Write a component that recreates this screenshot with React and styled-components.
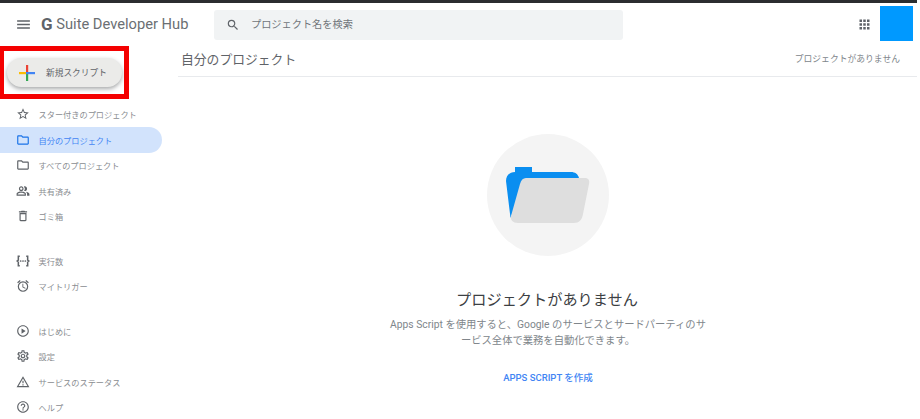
import React from 'react'
import styled, { createGlobalStyle } from 'styled-components'
import {
  MdMenu,
  MdSearch,
  MdApps,
  MdStarBorder,
  MdOutlineFolder,
  MdOutlinePeopleAlt,
  MdOutlineDelete,
  MdOutlineAlarm,
  MdOutlinePlayCircle,
  MdOutlineSettings,
  MdOutlineWarningAmber,
  MdOutlineHelpOutline,
} from 'react-icons/md'

const GlobalStyle = createGlobalStyle`
  html, body {
    margin: 0;
    padding: 0;
    background: #fff;
    overflow: hidden;
  }
  body {
    font-family: Roboto, "Noto Sans CJK JP", sans-serif;
  }
`

const Page = styled.div`
  width: 917px;
  height: 419px;
  border-top: 3px solid #2b2d30;
  box-sizing: border-box;
  display: flex;
  flex-direction: column;
  overflow: hidden;
`

const TopBar = styled.header`
  height: 43px;
  flex: none;
  display: flex;
  align-items: flex-start;
`

const MenuButton = styled.div`
  width: 41px;
  height: 42px;
  display: flex;
  align-items: center;
  justify-content: center;
  color: #5f6368;
  font-size: 17px;
  padding-left: 5px;
  box-sizing: border-box;
`

const Logo = styled.div`
  width: 173px;
  height: 42px;
  display: flex;
  align-items: center;
  font-size: 14.7px;
  color: #6b6f73;
  white-space: pre;
  b {
    font-weight: 700;
    font-size: 17px;
    color: #5f6368;
  }
`

const SearchBar = styled.div`
  width: 409px;
  height: 30px;
  margin-top: 7px;
  border-radius: 3px;
  background: #f1f3f4;
  display: flex;
  align-items: center;
  padding-left: 12px;
  box-sizing: border-box;
  gap: 11px;
  color: #5f6368;
  font-size: 14px;
  span {
    font-size: 10.2px;
    color: #70757a;
    padding-bottom: 3px;
  }
`

const TopRight = styled.div`
  margin-left: auto;
  display: flex;
  align-items: flex-start;
  padding-right: 4px;
`

const AppsButton = styled.div`
  height: 42px;
  display: flex;
  align-items: center;
  color: #5f6368;
  font-size: 15px;
  margin-right: 8px;
`

const Avatar = styled.div`
  width: 33px;
  height: 35px;
  margin-top: 3px;
  background: #0099ff;
`

const Body = styled.div`
  flex: 1;
  display: flex;
  min-height: 0;
`

const Sidebar = styled.aside`
  width: 178px;
  flex: none;
`

const Highlight = styled.div`
  width: 129px;
  height: 53px;
  box-sizing: border-box;
  border: 5px solid #f40000;
  border-left-width: 4px;
  display: flex;
  align-items: center;
  padding-left: 3px;
`

const CreateButton = styled.div`
  width: 115px;
  height: 29px;
  border-radius: 15px;
  background: #ebebe9;
  box-shadow: 0 2px 4px rgba(60, 64, 67, 0.45);
  display: flex;
  align-items: center;
  padding-left: 12px;
  box-sizing: border-box;
  gap: 11px;
  font-size: 8.7px;
  color: #5f6368;
  white-space: nowrap;
`

const Nav = styled.nav`
  margin-top: 2.5px;
  display: flex;
  flex-direction: column;
`

const NavGroup = styled.div`
  display: flex;
  flex-direction: column;
  margin-bottom: ${(p) => p.$gap || 0}px;
`

const NavItem = styled.div`
  width: 162px;
  height: 25.5px;
  display: flex;
  align-items: center;
  padding-left: 16px;
  box-sizing: border-box;
  gap: 8.5px;
  font-size: 8.2px;
  border-radius: 0 13px 13px 0;
  white-space: nowrap;
  color: ${(p) => (p.$active ? '#4285f4' : '#8a8d91')};
  background: ${(p) => (p.$active ? '#d2e3fc' : 'transparent')};
  svg {
    flex: none;
    width: 14px;
    height: 14px;
    color: ${(p) => (p.$active ? '#1a73e8' : '#5f6368')};
  }
`

const Main = styled.main`
  flex: 1;
  display: flex;
  flex-direction: column;
  min-width: 0;
`

const MainHeader = styled.div`
  height: 31px;
  flex: none;
  box-sizing: border-box;
  display: flex;
  align-items: center;
  justify-content: space-between;
  padding: 0 17px 5px 2px;
  border-bottom: 1px solid #e8eaed;
`

const HeaderTitle = styled.h1`
  margin: 0 0 0 1px;
  font-size: 12.8px;
  font-weight: 400;
  color: #5f6368;
`

const HeaderStatus = styled.span`
  font-size: 8.8px;
  color: #80868b;
`

const Empty = styled.section`
  width: 330px;
  margin: 57px 0 0 205px;
  display: flex;
  flex-direction: column;
  align-items: center;
  text-align: center;
`

const Illustration = styled.div`
  width: 122px;
  height: 122px;
  border-radius: 50%;
  background: #f4f4f4;
  display: flex;
  align-items: center;
  justify-content: center;
`

const EmptyTitle = styled.h2`
  margin: 33px 2px 0 0;
  font-size: 15.2px;
  line-height: 22px;
  font-weight: 400;
  color: #3c4043;
`

const EmptyText = styled.p`
  margin: 6px 0 0;
  font-size: 10.3px;
  line-height: 16px;
  color: #80868b;
  white-space: nowrap;
`

const CreateLink = styled.a`
  margin-top: 22px;
  font-size: 9.5px;
  line-height: 14px;
  font-weight: 500;
  color: #4285f4;
`

const PlusIcon = () => (
  <svg width="16" height="16" viewBox="0 0 16 16">
    <rect x="7" y="0" width="2.2" height="7" fill="#ea4335" />
    <rect x="7" y="9" width="2.2" height="7" fill="#34a853" />
    <rect x="0" y="7" width="7" height="2.2" fill="#fbbc04" />
    <rect x="7" y="7" width="9" height="2.2" fill="#4285f4" />
  </svg>
)

const BracesIcon = () => (
  <svg viewBox="0 0 24 24" fill="none" stroke="currentColor" strokeWidth="2.6">
    <path d="M6.5 4H4v6.5L2 12l2 1.5V20h2.5" />
    <path d="M17.5 4H20v6.5l2 1.5-2 1.5V20h-2.5" />
    <g fill="currentColor" stroke="none">
      <circle cx="8" cy="12" r="1.5" />
      <circle cx="12" cy="12" r="1.5" />
      <circle cx="16" cy="12" r="1.5" />
    </g>
  </svg>
)

const FolderArt = () => (
  <svg width="84" height="56" viewBox="0 0 84 56">
    <path
      d="M9 5V0h17v5h39c4 0 7 2 8 6H20L4.5 51 0 14c0-6 4-9 9-9z"
      fill="#0a8ef0"
    />
    <path
      d="M20 11h59c3 0 5 2 4 6l-6 30c-1 6-4 9-9 9H12c-5 0-8-3-7-7l9-32c1-4 3-6 6-6z"
      fill="#dedede"
    />
  </svg>
)

const groups = [
  {
    gap: 19,
    items: [
      { icon: <MdStarBorder />, label: 'スター付きのプロジェクト' },
      { icon: <MdOutlineFolder />, label: '自分のプロジェクト', active: true },
      { icon: <MdOutlineFolder />, label: 'すべてのプロジェクト' },
      { icon: <MdOutlinePeopleAlt />, label: '共有済み' },
      { icon: <MdOutlineDelete />, label: 'ゴミ箱' },
    ],
  },
  {
    gap: 19,
    items: [
      { icon: <BracesIcon />, label: '実行数' },
      { icon: <MdOutlineAlarm />, label: 'マイトリガー' },
    ],
  },
  {
    items: [
      { icon: <MdOutlinePlayCircle />, label: 'はじめに' },
      { icon: <MdOutlineSettings />, label: '設定' },
      { icon: <MdOutlineWarningAmber />, label: 'サービスのステータス' },
      { icon: <MdOutlineHelpOutline />, label: 'ヘルプ' },
    ],
  },
]

export default function App() {
  return (
    <Page>
      <GlobalStyle />
      <TopBar>
        <MenuButton>
          <MdMenu />
        </MenuButton>
        <Logo>
          <b>G</b> Suite Developer Hub
        </Logo>
        <SearchBar>
          <MdSearch />
          <span>プロジェクト名を検索</span>
        </SearchBar>
        <TopRight>
          <AppsButton>
            <MdApps />
          </AppsButton>
          <Avatar />
        </TopRight>
      </TopBar>
      <Body>
        <Sidebar>
          <Highlight>
            <CreateButton>
              <PlusIcon />
              新規スクリプト
            </CreateButton>
          </Highlight>
          <Nav>
            {groups.map((group, i) => (
              <NavGroup key={i} $gap={group.gap}>
                {group.items.map((item) => (
                  <NavItem key={item.label} $active={item.active}>
                    {item.icon}
                    {item.label}
                  </NavItem>
                ))}
              </NavGroup>
            ))}
          </Nav>
        </Sidebar>
        <Main>
          <MainHeader>
            <HeaderTitle>自分のプロジェクト</HeaderTitle>
            <HeaderStatus>プロジェクトがありません</HeaderStatus>
          </MainHeader>
          <Empty>
            <Illustration>
              <FolderArt />
            </Illustration>
            <EmptyTitle>プロジェクトがありません</EmptyTitle>
            <EmptyText>
              Apps Script を使用すると、Google のサービスとサードパーティのサ
              <br />
              ービス全体で業務を自動化できます。
            </EmptyText>
            <CreateLink>APPS SCRIPT を作成</CreateLink>
          </Empty>
        </Main>
      </Body>
    </Page>
  )
}
